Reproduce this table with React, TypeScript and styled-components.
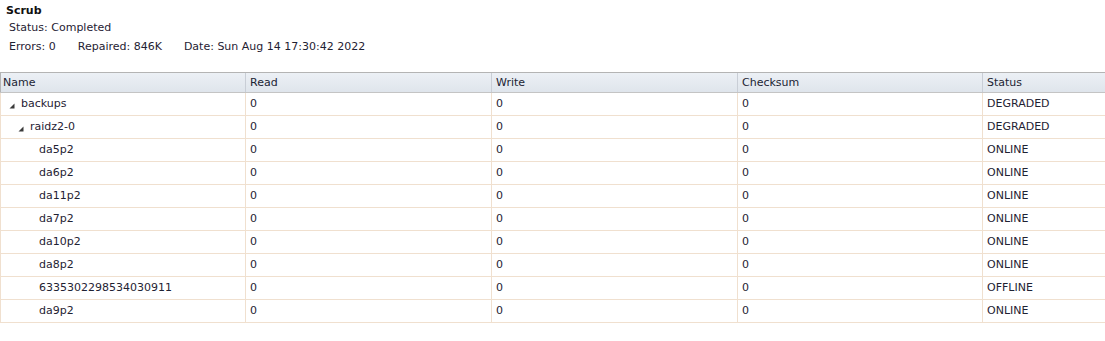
import React from "react";
import styled, { createGlobalStyle } from "styled-components";

const Global = createGlobalStyle`
  html, body { margin: 0; padding: 0; background: #fff; }
  body { font-family: "DejaVu Sans", Verdana, sans-serif; font-size: 11px; color: #1f2233; }
`;

const Page = styled.div`
  padding-top: 4px;
`;

const Title = styled.div`
  padding-left: 6px;
  font-weight: bold;
  line-height: 14px;
  height: 14px;
  color: #111;
`;

const StatusLine = styled.div`
  padding-left: 9px;
  margin-top: 3px;
  line-height: 14px;
  height: 14px;
`;

const Stats = styled.div`
  display: flex;
  gap: 22px;
  padding-left: 9px;
  margin-top: 5px;
  line-height: 14px;
  height: 14px;
`;

const Table = styled.div`
  margin-top: 18px;
`;

const cols = "245px 246px 246px 245px 1fr";

const HeaderRow = styled.div`
  display: grid;
  grid-template-columns: ${cols};
  height: 19px;
  border-top: 1px solid #b4b4b4;
  border-bottom: 1px solid #c4c4c4;
  background: linear-gradient(#ecf0f5, #dfe5ec);
`;

const HeaderCell = styled.div<{ $first?: boolean }>`
  box-sizing: border-box;
  border-left: 1px solid ${(p) => (p.$first ? "#b4b4b4" : "#c9ced6")};
  padding-left: ${(p) => (p.$first ? "2px" : "4px")};
  line-height: 19px;
  color: #1c2433;
  white-space: nowrap;
  overflow: hidden;
`;

const Row = styled.div`
  display: grid;
  grid-template-columns: ${cols};
  height: 22px;
  border-bottom: 1px solid #f0e0cf;
`;

const Cell = styled.div`
  box-sizing: border-box;
  border-left: 1px solid #f0e0cf;
  padding-left: 4px;
  line-height: 22px;
  white-space: nowrap;
  overflow: hidden;
`;

const NameCell = styled(Cell)<{ $level: number }>`
  display: flex;
  align-items: center;
  padding-left: ${(p) => 2 + p.$level * 9}px;
`;

const Toggle = styled.span`
  width: 18px;
  flex: none;
  display: flex;
  align-items: center;
  height: 22px;
  svg {
    margin-left: 6px;
    margin-top: 3px;
  }
`;

type Node = { name: string; level: number; expander?: boolean; status: string };

const rows: Node[] = [
  { name: "backups", level: 0, expander: true, status: "DEGRADED" },
  { name: "raidz2-0", level: 1, expander: true, status: "DEGRADED" },
  { name: "da5p2", level: 2, status: "ONLINE" },
  { name: "da6p2", level: 2, status: "ONLINE" },
  { name: "da11p2", level: 2, status: "ONLINE" },
  { name: "da7p2", level: 2, status: "ONLINE" },
  { name: "da10p2", level: 2, status: "ONLINE" },
  { name: "da8p2", level: 2, status: "ONLINE" },
  { name: "6335302298534030911", level: 2, status: "OFFLINE" },
  { name: "da9p2", level: 2, status: "ONLINE" },
];

const Arrow = () => (
  <svg width="6" height="6" viewBox="0 0 6 6">
    <polygon points="5.5,0.5 5.5,5.5 0.5,5.5" fill="#3a3a3a" />
  </svg>
);

export default function App() {
  return (
    <Page>
      <Global />
      <Title>Scrub</Title>
      <StatusLine>Status: Completed</StatusLine>
      <Stats>
        <span>Errors: 0</span>
        <span>Repaired: 846K</span>
        <span>Date: Sun Aug 14 17:30:42 2022</span>
      </Stats>
      <Table>
        <HeaderRow>
          <HeaderCell $first>Name</HeaderCell>
          <HeaderCell>Read</HeaderCell>
          <HeaderCell>Write</HeaderCell>
          <HeaderCell>Checksum</HeaderCell>
          <HeaderCell>Status</HeaderCell>
        </HeaderRow>
        {rows.map((r) => (
          <Row key={r.name}>
            <NameCell $level={r.level}>
              {r.expander ? (
                <Toggle>
                  <Arrow />
                </Toggle>
              ) : (
                <Toggle />
              )}
              {r.name}
            </NameCell>
            <Cell>0</Cell>
            <Cell>0</Cell>
            <Cell>0</Cell>
            <Cell>{r.status}</Cell>
          </Row>
        ))}
      </Table>
    </Page>
  );
}
